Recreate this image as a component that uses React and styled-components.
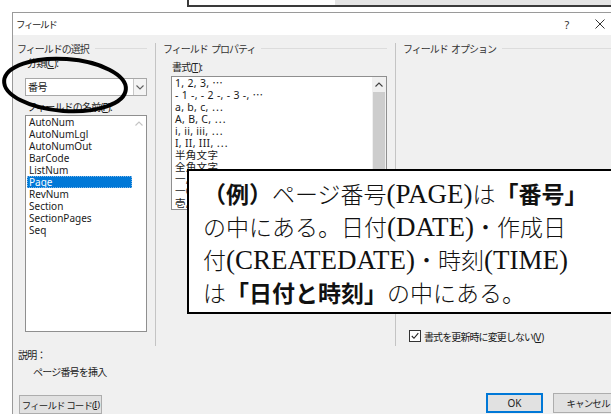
import React from "react";
import styled, { createGlobalStyle } from "styled-components";

const GlobalStyle = createGlobalStyle`
  html, body {
    margin: 0;
    padding: 0;
    background: #fff;
  }
  body {
    font-family: "Noto Sans", "Noto Sans CJK JP", sans-serif;
    color: #1a1a1a;
  }
`;

const Page = styled.div`
  position: relative;
  width: 611px;
  height: 414px;
  overflow: hidden;
  background: #fff;
`;

// strip of the document window behind the dialog
const TopStrip = styled.div`
  height: 12px;
  padding-left: 187px;
`;

const DocEdge = styled.div`
  display: flex;
  height: 5px;
  border-left: 2px solid #3a3a3a;
  border-bottom: 2px solid #3a3a3a;
`;

const DocPane = styled.div`
  width: ${(p) => (p.$w ? `${p.$w}px` : "auto")};
  flex: ${(p) => (p.$w ? "none" : 1)};
  background: ${(p) => p.$bg};
`;

const Dialog = styled.div`
  margin-left: 12px;
  height: 401px;
  border-left: 1px solid #9a9a9a;
  border-top: 1px solid #9a9a9a;
  display: flex;
  flex-direction: column;
`;

const TitleBar = styled.div`
  height: 22px;
  background: #fff;
  display: flex;
  align-items: center;
  padding-left: 3px;
`;

const TitleText = styled.div`
  flex: 1;
  font-size: 9.5px;
  letter-spacing: -1.4px;
  color: #222;
`;

const TitleButton = styled.div`
  width: 22px;
  height: 22px;
  display: flex;
  align-items: center;
  justify-content: center;
  font-size: 11px;
  color: #333;
  margin-left: ${(p) => p.$gap || 0}px;
`;

const Body = styled.div`
  flex: 1;
  background: #f0f0f0;
  display: flex;
  flex-direction: column;
`;

const Columns = styled.div`
  margin-top: 8px;
  height: 303px;
  display: grid;
  grid-template-columns: 142px 240px 1fr;
`;

const Column = styled.div`
  display: flex;
  flex-direction: column;
  border-left: ${(p) => (p.$divider ? "1px solid #c4c4c4" : "none")};
  padding: ${(p) => p.$pad};
`;

const GroupHeader = styled.div`
  display: flex;
  align-items: center;
  height: 10px;
  margin-left: ${(p) => p.$shift || 0}px;
  font-size: 10px;
  letter-spacing: -1px;
  color: #333;
  white-space: pre;
`;

const Rule = styled.div`
  flex: 1;
  height: 1px;
  margin-left: 6px;
  background: #dcdcdc;
`;

const Label = styled.div`
  height: 12px;
  line-height: 12px;
  margin-top: ${(p) => p.$top}px;
  padding-left: ${(p) => p.$indent || 0}px;
  font-size: 10px;
  letter-spacing: -0.8px;
  color: #222;
  white-space: nowrap;

  u {
    letter-spacing: 0;
    text-underline-offset: 1px;
  }
`;

const Combo = styled.div`
  margin-top: 9px;
  height: 16px;
  display: flex;
  background: #fff;
  border: 1px solid #a8a8a8;
`;

const ComboText = styled.div`
  flex: 1;
  padding-left: 2px;
  font-size: 10px;
  line-height: 16px;
  letter-spacing: -0.6px;
`;

const ComboButton = styled.div`
  width: 12px;
  border-left: 1px solid #c8c8c8;
  background: #f4f4f4;
  display: flex;
  align-items: center;
  justify-content: center;
`;

const ListBox = styled.div`
  margin-top: ${(p) => p.$top}px;
  height: ${(p) => p.$h}px;
  display: flex;
  background: #fff;
  border: 1px solid #8f8f8f;
  overflow: hidden;
`;

const ListItems = styled.div`
  flex: 1;
  padding-left: 1px;
`;

const ListRow = styled.div`
  height: 12px;
  line-height: 12px;
  padding-left: 2px;
  font-size: ${(p) => (p.$wide ? "10.5px" : "10px")};
  letter-spacing: ${(p) => (p.$wide ? "0.3px" : "0")};
  white-space: nowrap;
  color: ${(p) => (p.$selected ? "#fff" : "#1a1a1a")};
  background: ${(p) => (p.$selected ? "#0078d7" : "transparent")};
  outline: ${(p) => (p.$selected ? "1px dotted #7fb6e6" : "none")};
  outline-offset: -1px;
`;

const ScrollTrack = styled.div`
  width: 14px;
  display: flex;
  flex-direction: column;
  background: ${(p) => (p.$active ? "#f0f0f0" : "#fff")};
`;

const ScrollArrow = styled.div`
  height: 14px;
  display: flex;
  align-items: center;
  justify-content: center;
`;

const ScrollThumb = styled.div`
  margin: 1px 1px 0;
  height: 110px;
  background: #cdcdcd;
`;

const CheckRow = styled.div`
  margin: auto 0 4px 6px;
  height: 12px;
  display: flex;
  align-items: center;
  gap: 3px;
  font-size: 10px;
  letter-spacing: -0.9px;
  white-space: nowrap;

  u {
    letter-spacing: 0;
  }
`;

const CheckBox = styled.div`
  width: 10px;
  height: 10px;
  border: 1px solid #333;
  background: #fff;
  display: flex;
  align-items: center;
  justify-content: center;
`;

const Footer = styled.div`
  display: flex;
  flex-direction: column;
`;

const ButtonRow = styled.div`
  margin-top: 15px;
  margin-right: -12px;
  display: flex;
  align-items: flex-start;
`;

const Button = styled.div`
  box-sizing: border-box;
  width: ${(p) => p.$w}px;
  height: ${(p) => p.$h || 20}px;
  margin-top: ${(p) => p.$top || 0}px;
  margin-left: ${(p) => p.$left || 0}px;
  display: flex;
  align-items: center;
  justify-content: center;
  background: #e1e1e1;
  border: ${(p) => (p.$default ? "2px solid #0078d7" : "1px solid #adadad")};
  font-size: ${(p) => (p.$tight ? "9.5px" : "10px")};
  letter-spacing: ${(p) => (p.$tight ? "-0.9px" : "0")};
  color: #222;
  white-space: nowrap;

  u {
    letter-spacing: 0;
  }
`;

const Spacer = styled.div`
  flex: 1;
`;

// hand-drawn ring around the category box
const Ring = styled.svg`
  position: absolute;
  left: 0;
  top: 50px;
`;

// annotation card laid over the dialog
const Callout = styled.div`
  position: absolute;
  left: 187px;
  top: 169px;
  width: 411px;
  height: 135px;
  border: 2px solid #000;
  background: #fff;
  padding: 6px 0 0 14px;
  font-family: "Noto Sans CJK JP", sans-serif;
  font-weight: 300;
  font-size: 23px;
  line-height: 32px;
  color: #111;
  white-space: nowrap;
`;

const Strong = styled.b`
  font-family: "Noto Sans CJK JP", sans-serif;
  font-weight: 700;
`;

const Latin = styled.span`
  font-family: "Liberation Serif", serif;
  font-weight: 400;
  font-size: 27px;
`;

const Chevron = ({ up, color = "#606060" }) => (
  <svg width="8" height="5" viewBox="0 0 8 5">
    <polyline
      points={up ? "0.5,4.5 4,1 7.5,4.5" : "0.5,0.5 4,4 7.5,0.5"}
      fill="none"
      stroke={color}
      strokeWidth="1.1"
    />
  </svg>
);

const fieldNames = [
  "AutoNum",
  "AutoNumLgl",
  "AutoNumOut",
  "BarCode",
  "ListNum",
  "Page",
  "RevNum",
  "Section",
  "SectionPages",
  "Seq",
];

const formats = [
  "1, 2, 3, ⋯",
  "- 1 -, - 2 -, - 3 -, ⋯",
  "a, b, c, ⋯",
  "A, B, C, ⋯",
  "i, ii, iii, ⋯",
  "I, II, III, ⋯",
  "半角文字",
  "全角文字",
  "一, 二, 三, ⋯",
  "一〇, 一一, 一二, ⋯",
  "壱, 弐, 参, ⋯",
];

export default function App() {
  return (
    <Page>
      <GlobalStyle />
      <TopStrip>
        <DocEdge>
          <DocPane $w={146} $bg="#fff" />
          <DocPane $bg="#e4e4e4" />
        </DocEdge>
      </TopStrip>

      <Dialog>
        <TitleBar>
          <TitleText>フィールド</TitleText>
          <TitleButton>?</TitleButton>
          <TitleButton $gap={11}>
            <svg width="10" height="10" viewBox="0 0 10 10">
              <path d="M0.5 0.5 L9.5 9.5 M9.5 0.5 L0.5 9.5" stroke="#333" strokeWidth="1" />
            </svg>
          </TitleButton>
        </TitleBar>

        <Body>
          <Columns>
            <Column $pad="0 8px 0 12px">
              <GroupHeader $shift={-8}>
                フィールドの選択
                <Rule />
              </GroupHeader>
              <Label $top={4} $indent={2}>
                分類(<u>C</u>):
              </Label>
              <Combo>
                <ComboText>番号</ComboText>
                <ComboButton>
                  <Chevron />
                </ComboButton>
              </Combo>
              <Label $top={5} $indent={2}>
                フィールドの名前(<u>F</u>):
              </Label>
              <ListBox $top={2} $h={215}>
                <ListItems>
                  {fieldNames.map((name) => (
                    <ListRow key={name} $selected={name === "Page"}>
                      {name}
                    </ListRow>
                  ))}
                </ListItems>
                <ScrollTrack>
                  <ScrollArrow>
                    <Chevron up color="#c4c4c4" />
                  </ScrollArrow>
                </ScrollTrack>
              </ListBox>
            </Column>

            <Column $divider $pad="0 8px 0 15px">
              <GroupHeader $shift={-8}>
                {"フィールド  プロパティ"}
                <Rule />
              </GroupHeader>
              <Label $top={8} $indent={1}>
                書式(<u>T</u>):
              </Label>
              <ListBox $top={3} $h={132}>
                <ListItems>
                  {formats.map((f) => (
                    <ListRow key={f} $wide>
                      {f}
                    </ListRow>
                  ))}
                </ListItems>
                <ScrollTrack $active>
                  <ScrollArrow>
                    <Chevron up color="#404040" />
                  </ScrollArrow>
                  <ScrollThumb />
                </ScrollTrack>
              </ListBox>
            </Column>

            <Column $divider $pad="0 0 0 7px">
              <GroupHeader>
                {"フィールド  オプション"}
                <Rule />
              </GroupHeader>
              <CheckRow>
                <CheckBox>
                  <svg width="8" height="8" viewBox="0 0 8 8">
                    <polyline points="0.8,4 3,6.3 7.3,1.2" fill="none" stroke="#222" strokeWidth="1.1" />
                  </svg>
                </CheckBox>
                <span>
                  書式を更新時に変更しない(<u>V</u>)
                </span>
              </CheckRow>
            </Column>
          </Columns>

          <Footer>
            <Label $top={3} $indent={5}>
              説明：
            </Label>
            <Label $top={5} $indent={20}>
              ページ番号を挿入
            </Label>
            <ButtonRow>
              <Button $w={83} $h={19} $top={2} $left={6} $tight>
                フィールド コード(<u>I</u>)
              </Button>
              <Spacer />
              <Button $w={57} $default>
                OK
              </Button>
              <Button $w={70} $left={10} $tight>
                キャンセル
              </Button>
            </ButtonRow>
          </Footer>
        </Body>
      </Dialog>

      <Ring width="140" height="72" viewBox="0 0 140 72">
        <ellipse
          cx="65"
          cy="35"
          rx="61"
          ry="26"
          transform="rotate(4 65 35)"
          fill="none"
          stroke="#000"
          strokeWidth="4"
        />
      </Ring>

      <Callout>
        <Strong>（例）</Strong>ページ番号<Latin>(PAGE)</Latin>は<Strong>「番号」</Strong>
        <br />
        の中にある。日付<Latin>(DATE)</Latin>・作成日
        <br />
        付<Latin>(CREATEDATE)</Latin>・時刻<Latin>(TIME)</Latin>
        <br />
        は<Strong>「日付と時刻」</Strong>の中にある。
      </Callout>
    </Page>
  );
}
